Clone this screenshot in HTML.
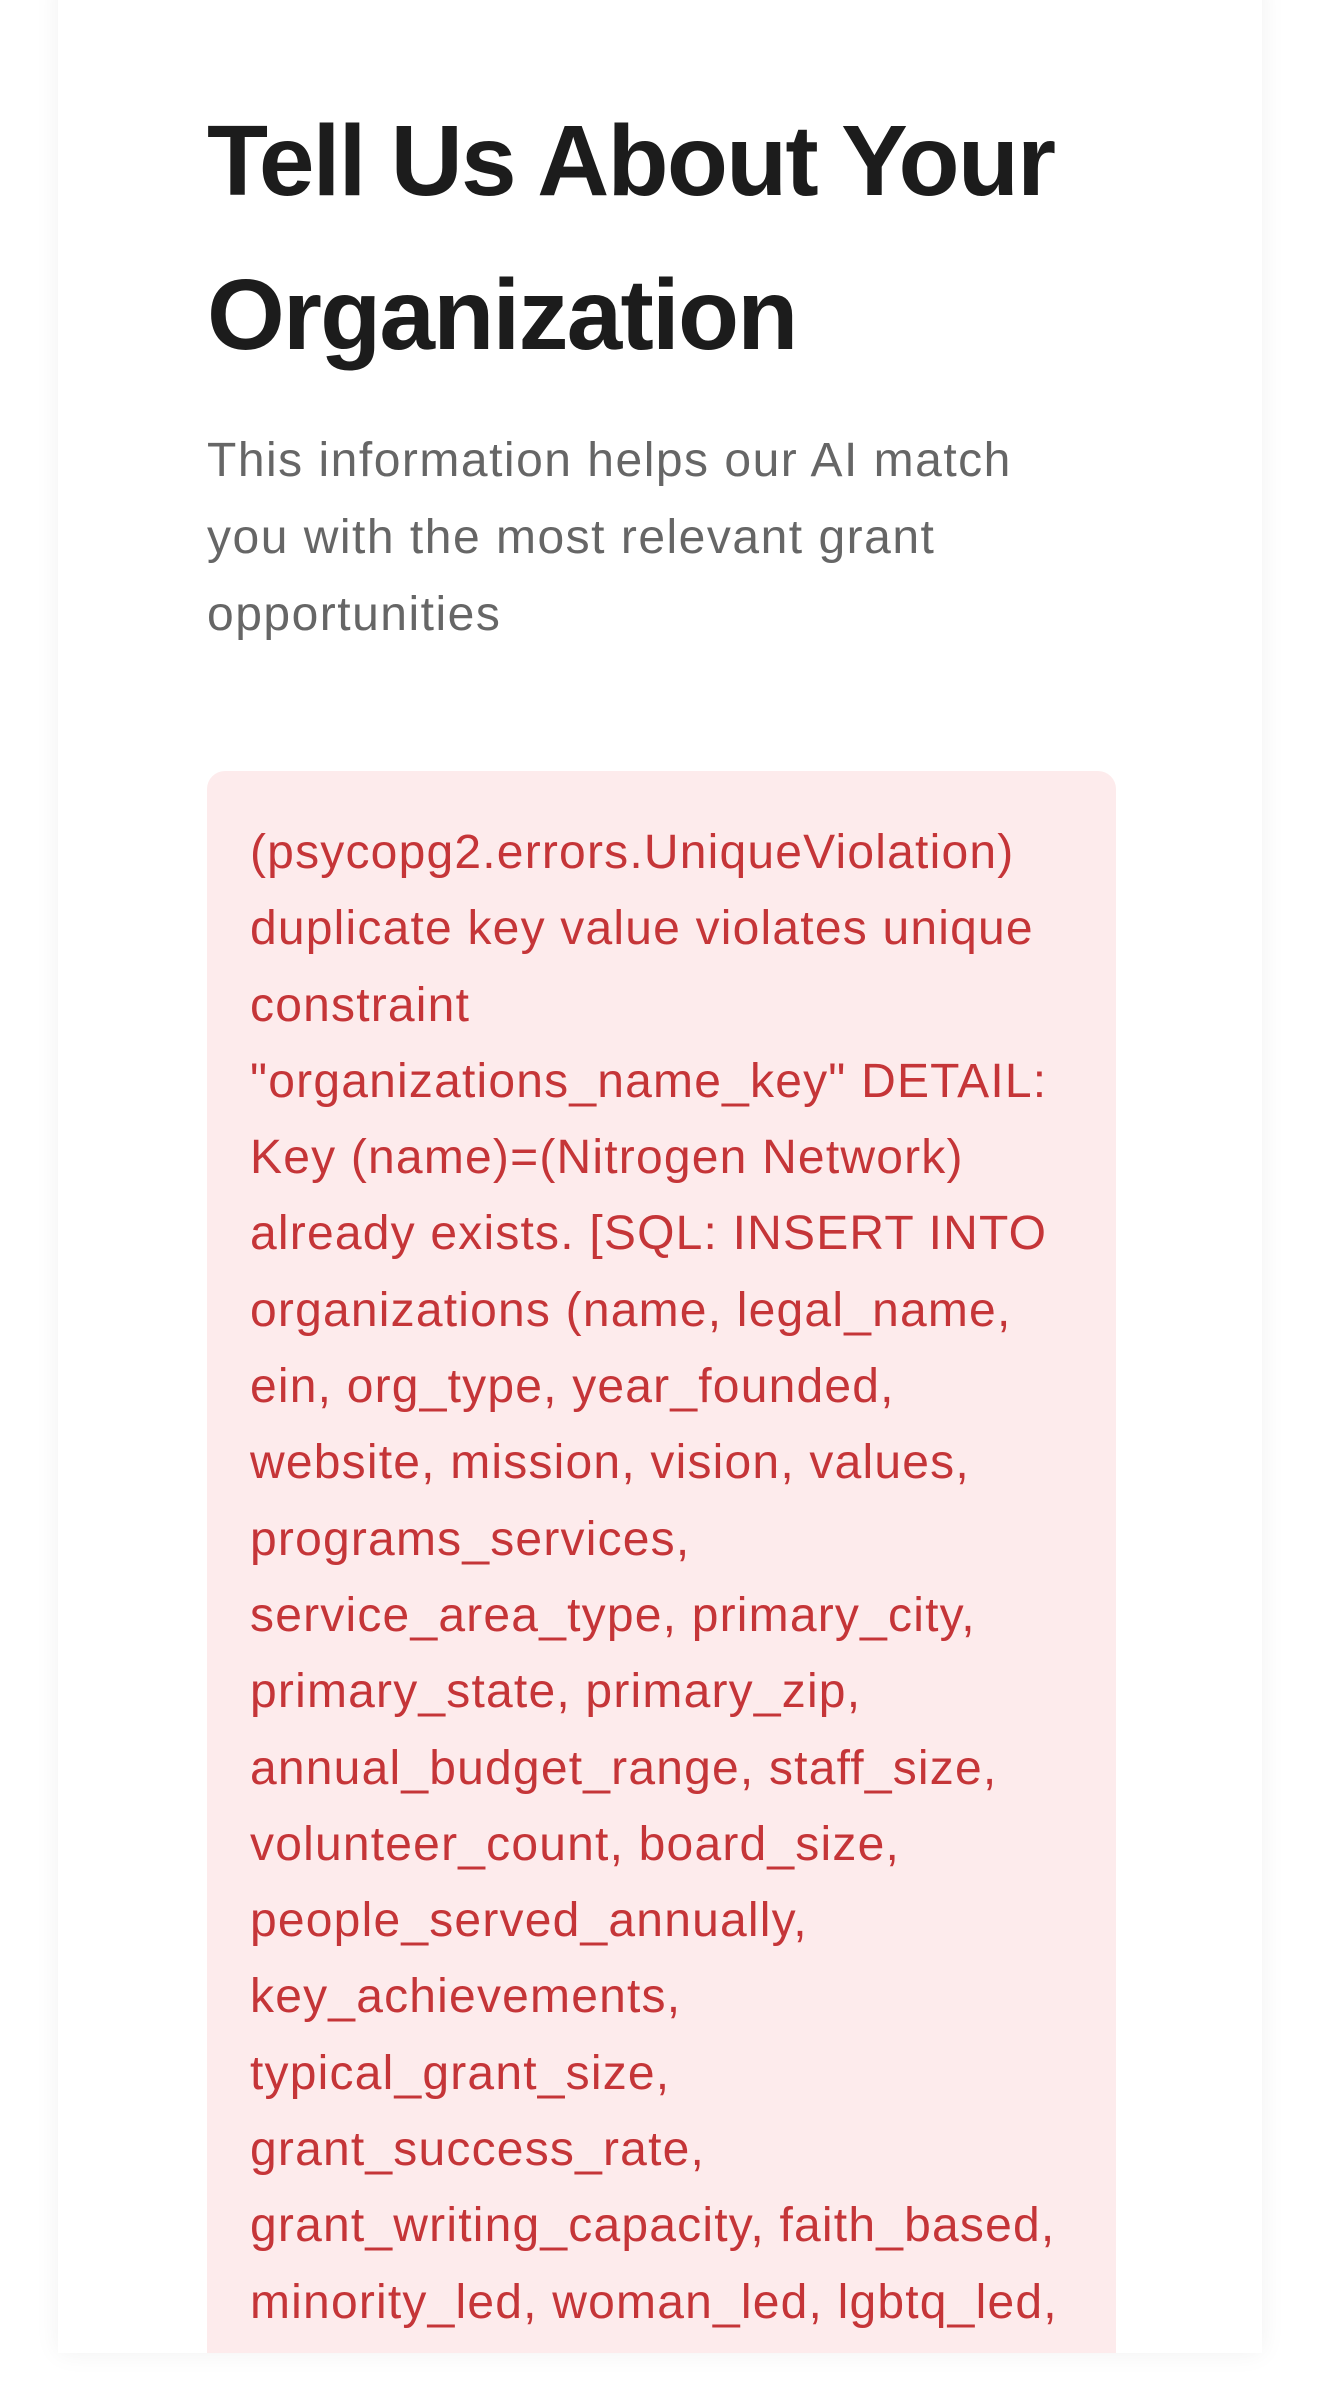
<!DOCTYPE html>
<html><head><meta charset="utf-8"><style>
html,body{margin:0;padding:0;background:#fff;width:1320px;height:2404px;overflow:hidden}
body{font-family:"Liberation Sans",sans-serif}
.card{position:absolute;left:58px;top:-20px;width:1204px;height:2373px;background:#fff;box-shadow:0 0 24px rgba(0,0,0,0.06);overflow:hidden}
h1{position:absolute;left:149px;top:104px;margin:0;font-size:100px;line-height:154px;font-weight:700;color:#1c1c1c;letter-spacing:-1.8px;white-space:nowrap}
.sub{position:absolute;left:149px;top:442px;margin:0;font-size:48px;line-height:77px;color:#666;letter-spacing:1.5px;white-space:nowrap}
.err{position:absolute;left:149px;top:791px;width:909px;height:1700px;background:#fdebec;border-radius:18px}
.err div{position:absolute;left:43px;top:44px;font-size:48px;line-height:76.3px;color:#c53538;white-space:nowrap;letter-spacing:1.2px}
</style></head><body>
<div class="card">
<h1>Tell Us About Your<br>Organization</h1>
<p class="sub">This information helps our AI match<br>you with the most relevant grant<br>opportunities</p>
<div class="err"><div>(psycopg2.errors.UniqueViolation)<br>duplicate key value violates unique<br>constraint<br>"organizations_name_key" DETAIL:<br>Key (name)=(Nitrogen Network)<br>already exists. [SQL: INSERT INTO<br>organizations (name, legal_name,<br>ein, org_type, year_founded,<br>website, mission, vision, values,<br>programs_services,<br>service_area_type, primary_city,<br>primary_state, primary_zip,<br>annual_budget_range, staff_size,<br>volunteer_count, board_size,<br>people_served_annually,<br>key_achievements,<br>typical_grant_size,<br>grant_success_rate,<br>grant_writing_capacity, faith_based,<br>minority_led, woman_led, lgbtq_led,</div></div>
</div>
</body></html>
